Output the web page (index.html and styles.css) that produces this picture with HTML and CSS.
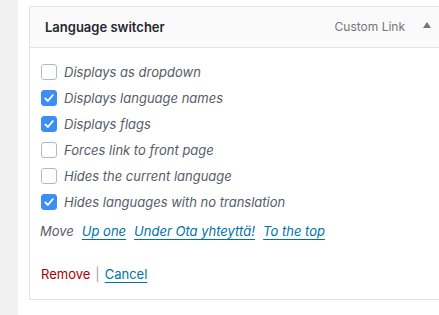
FILE: index.html
```html
<!DOCTYPE html>
<html lang="en">
<head>
<meta charset="utf-8">
<title>Language switcher</title>
<link rel="stylesheet" href="styles.css">
</head>
<body>
<div class="page">
  <aside class="sidebar"></aside>
  <main class="main">
    <div class="widget">
      <div class="widget-head">
        <span class="widget-title">Language switcher</span>
        <span class="widget-type">Custom Link</span>
        <span class="toggle"></span>
      </div>
      <div class="widget-body">
        <label class="opt"><span class="cb"></span><span class="opt-text">Displays as dropdown</span></label>
        <label class="opt"><span class="cb checked"><svg viewBox="0 0 16 16" width="16" height="16"><path d="M4.3 8.4 L6.9 11 L11.8 5.2" fill="none" stroke="#fff" stroke-width="1.8" stroke-linecap="round" stroke-linejoin="round"/></svg></span><span class="opt-text">Displays language names</span></label>
        <label class="opt"><span class="cb checked"><svg viewBox="0 0 16 16" width="16" height="16"><path d="M4.3 8.4 L6.9 11 L11.8 5.2" fill="none" stroke="#fff" stroke-width="1.8" stroke-linecap="round" stroke-linejoin="round"/></svg></span><span class="opt-text">Displays flags</span></label>
        <label class="opt"><span class="cb"></span><span class="opt-text">Forces link to front page</span></label>
        <label class="opt"><span class="cb"></span><span class="opt-text">Hides the current language</span></label>
        <label class="opt"><span class="cb checked"><svg viewBox="0 0 16 16" width="16" height="16"><path d="M4.3 8.4 L6.9 11 L11.8 5.2" fill="none" stroke="#fff" stroke-width="1.8" stroke-linecap="round" stroke-linejoin="round"/></svg></span><span class="opt-text">Hides languages with no translation</span></label>
        <div class="move">
          <span class="move-label">Move</span>
          <a class="move-link" href="#">Up one</a>
          <a class="move-link" href="#">Under Ota yhteyttä!</a>
          <a class="move-link" href="#">To the top</a>
        </div>
        <div class="actions">
          <a class="remove" href="#">Remove</a>
          <span class="sep">|</span>
          <a class="cancel" href="#">Cancel</a>
        </div>
      </div>
    </div>
  </main>
</div>
</body>
</html>
```

FILE: styles.css
```css
* { box-sizing: border-box; }
html, body { margin: 0; padding: 0; }
body {
  background: #fff;
  font-family: Inter, "Noto Sans", Roboto, sans-serif;
  font-size: 13px;
  color: #555d66;
  overflow: hidden;
}
.page {
  display: flex;
  height: 315px;
}
.sidebar {
  width: 18px;
  flex: none;
  background: #f1f1f1;
}
.main {
  flex: 1;
  min-width: 0;
  padding: 6px 0 0 11px;
}
.widget {
  border: 1px solid #e2e4e7;
  border-right: 0;
  background: #fff;
}
.widget-head {
  height: 41px;
  display: flex;
  align-items: center;
  background: #fafafa;
  border-bottom: 1px solid #e2e4e7;
  padding: 0 0 0 15px;
}
.widget-title {
  font-size: 13px;
  font-weight: 600;
  color: #23282d;
  flex: 1;
  margin-top: -1px;
}
.widget-type {
  color: #72777c;
  font-size: 12px;
  margin-right: 18px;
  margin-top: -1px;
}
.toggle {
  width: 0;
  height: 0;
  border-left: 4px solid transparent;
  border-right: 4px solid transparent;
  border-bottom: 6px solid #72777c;
  margin-right: 8px;
  margin-top: -4px;
}
.widget-body {
  padding: 11px 0 0 11px;
  height: 251px;
}
.opt {
  display: flex;
  align-items: center;
  height: 26px;
}
.cb {
  width: 16px;
  height: 16px;
  border: 1px solid #b4b9be;
  border-radius: 3px;
  background: #fff;
  flex: none;
  display: flex;
}
.cb.checked {
  background: #3b8ef6;
  border-color: #3b8ef6;
}
.cb svg { margin: -1px; }
.opt-text {
  font-style: italic;
  margin-left: 7px;
}
.move {
  display: flex;
  align-items: center;
  gap: 8px;
  height: 32px;
  font-style: italic;
  margin-left: -1px;
}
.move-link {
  color: #0073aa;
  text-decoration: underline;
  text-underline-offset: 3px;
}
.actions {
  display: flex;
  align-items: center;
  gap: 5px;
  margin-top: 17px;
  height: 20px;
}
.remove {
  color: #a00;
  text-decoration: none;
}
.sep { color: #a0a5aa; }
.cancel {
  color: #0073aa;
  text-decoration: underline;
  text-underline-offset: 3px;
}
```
